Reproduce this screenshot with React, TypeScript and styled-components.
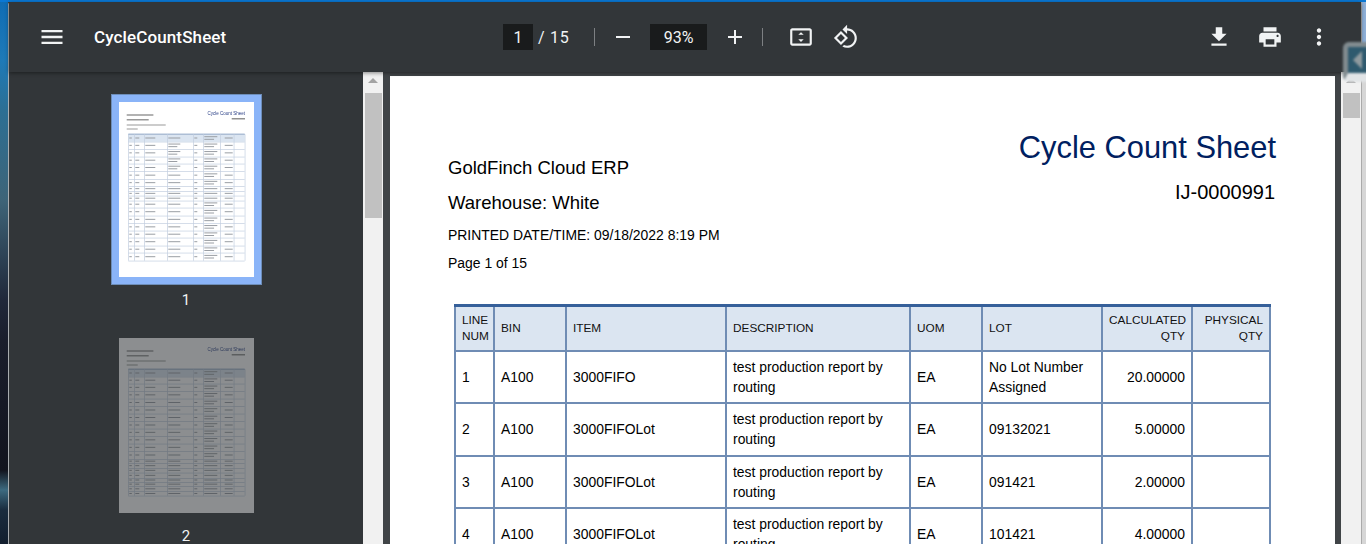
import React from "react";
import styled, { createGlobalStyle } from "styled-components";

const GlobalStyle = createGlobalStyle`
  html, body {
    margin: 0;
    padding: 0;
    height: 544px;
    overflow: hidden;
    background: #323639;
  }
`;

const Screen = styled.div`
  width: 1366px;
  height: 544px;
  display: flex;
  overflow: hidden;
  position: relative;
  font-family: Roboto, "Liberation Sans", sans-serif;
`;

const Wallpaper = styled.div`
  width: 8px;
  flex: none;
  background: linear-gradient(
    180deg,
    #0f6cb4 0,
    #1e7ab8 60px,
    #2c6f94 110px,
    #3e6478 200px,
    #20283a 300px,
    #1a1e2c 340px,
    #12141e 470px,
    #3d6a80 490px,
    #1a2c3e 510px,
    #121e2e 544px
  );
`;

const TopLine = styled.div`
  position: absolute;
  top: 0;
  left: 0;
  right: 0;
  height: 2px;
  background: #0a78d4;
`;

const Window = styled.div`
  width: 1353px;
  flex: none;
  display: flex;
  flex-direction: column;
  margin-top: 2px;
  border-left: 1px solid #a9adb0;
  border-top-left-radius: 3px;
  box-sizing: border-box;
`;

const RightEdge = styled.div`
  flex: 1;
  border-left: 1px solid #aaa;
  background: linear-gradient(180deg, #8fb0d8 0, #8fb0d8 70px, #d6d6d6 71px);
`;

const Toolbar = styled.header`
  height: 70px;
  flex: none;
  display: flex;
  align-items: center;
  background: #323639;
  color: #f1f3f4;
  box-shadow: 0 1px 4px rgba(0, 0, 0, 0.45);
  position: relative;
  z-index: 2;
`;

const TitleGroup = styled.div`
  width: 494px;
  flex: none;
  display: flex;
  align-items: center;
  gap: 28px;
  padding-left: 29px;
  box-sizing: border-box;
`;

const Title = styled.span`
  font-size: 17px;
  font-weight: 500;
  color: #fff;
  letter-spacing: 0.12px;
`;

const CenterGroup = styled.div`
  display: flex;
  align-items: center;
  font-size: 16px;
`;

const NumberBox = styled.span<{ $w: number }>`
  width: ${(p) => p.$w}px;
  height: 26px;
  display: flex;
  align-items: center;
  justify-content: center;
  background: #191b1c;
  color: #f1f3f4;
`;

const PageTotal = styled.span`
  margin-left: 5px;
  width: 56px;
  letter-spacing: 0.7px;
`;

const Divider = styled.span`
  width: 1px;
  height: 18px;
  background: #7d8083;
`;

const IconSlot = styled.span<{ $w: number; $ml?: number }>`
  width: ${(p) => p.$w}px;
  margin-left: ${(p) => p.$ml ?? 0}px;
  flex: none;
  display: flex;
  align-items: center;
  justify-content: center;
`;

const ActionGroup = styled.div`
  margin-left: auto;
  display: flex;
  align-items: center;
  padding-right: 18px;
`;

const Icon = styled.svg`
  display: block;
  flex: none;
  fill: #f1f3f4;
`;

const Body = styled.div`
  flex: 1;
  min-height: 0;
  display: flex;
`;

const Sidebar = styled.aside`
  width: 354px;
  flex: none;
  display: flex;
  flex-direction: column;
  align-items: center;
  padding: 22px 0 0 0;
  box-sizing: border-box;
  background: #323639;
  overflow: hidden;
`;

const ThumbEntry = styled.div<{ $gap: number }>`
  display: flex;
  flex-direction: column;
  align-items: center;
  flex: none;
  margin-bottom: ${(p) => p.$gap}px;
`;

const ThumbFrame = styled.div<{ $active?: boolean }>`
  padding: 8px;
  background: ${(p) => (p.$active ? "#8ab4f8" : "transparent")};
  outline: ${(p) => (p.$active ? "1px solid #6d8db8" : "none")};
  outline-offset: -1px;
`;

const ThumbPage = styled.svg<{ $dim?: boolean }>`
  display: block;
  background: #fff;
  opacity: ${(p) => (p.$dim ? 0.44 : 1)};
`;

const ThumbInk = styled.g`
  filter: blur(0.45px);
`;

const ThumbNumber = styled.span`
  margin-top: 6px;
  font-size: 15px;
  line-height: 18px;
  color: #f1f3f4;
`;

const Scrollbar = styled.div`
  width: 20px;
  flex: none;
  display: flex;
  flex-direction: column;
  align-items: center;
  background: #f1f1f1;
  padding-top: 6px;
  box-sizing: border-box;
`;

const ScrollArrow = styled.span`
  width: 0;
  height: 0;
  border-left: 5px solid transparent;
  border-right: 5px solid transparent;
  border-bottom: 5px solid #a3a3a3;
`;

const ScrollThumb = styled.span<{ $h: number }>`
  width: 17px;
  height: ${(p) => p.$h}px;
  margin-top: 10px;
  background: #c1c1c1;
`;

const Viewer = styled.main`
  flex: 1;
  min-width: 0;
  display: flex;
  background: #404447;
  padding: 4px 6px 0 7px;
  overflow: hidden;
`;

const DocPage = styled.section`
  flex: 1;
  background: #fff;
  color: #000;
  font-family: "Liberation Sans", Arial, sans-serif;
  padding: 55px 59px 0 58px;
  box-sizing: border-box;
  overflow: hidden;
`;

const DocHead = styled.div`
  display: flex;
  justify-content: space-between;
  height: 173px;
`;

const DocFacts = styled.div`
  padding-top: 26px;
`;

const CompanyLine = styled.div`
  font-size: 18.5px;
  line-height: 21px;
  margin-bottom: 14px;
`;

const SmallLine = styled.div<{ $gap: number }>`
  font-size: 13.95px;
  line-height: 16px;
  margin-bottom: ${(p) => p.$gap}px;
`;

const DocTitleBlock = styled.div`
  text-align: right;
`;

const DocTitle = styled.div`
  font-size: 30.85px;
  line-height: 34px;
  color: #002060;
`;

const DocNumber = styled.div`
  font-size: 20px;
  line-height: 23px;
  margin-top: 16px;
  margin-right: 1px;
`;

const Sheet = styled.table`
  border-collapse: collapse;
  table-layout: fixed;
  width: 815px;
  margin-left: 6px;
  border-top: 3px solid #36609a;
`;

const HeadCell = styled.th<{ $right?: boolean }>`
  height: 45px;
  padding: 0 6px 0 6px;
  box-sizing: border-box;
  background: #dbe5f1;
  border: 2px solid #6f8cb4;
  border-top: 0;
  font-size: 11.8px;
  line-height: 16px;
  font-weight: 400;
  color: #111;
  text-align: ${(p) => (p.$right ? "right" : "left")};
`;

const Cell = styled.td<{ $right?: boolean }>`
  height: 52.5px;
  padding: 0 6px;
  box-sizing: border-box;
  border: 2px solid #6f8cb4;
  font-size: 13.9px;
  line-height: 20px;
  text-align: ${(p) => (p.$right ? "right" : "left")};
`;

const TabOverlay = styled.div`
  position: absolute;
  top: 42px;
  left: 1343px;
  width: 30px;
  height: 40px;
  box-sizing: border-box;
  border: 5px solid rgba(140, 145, 148, 0.9);
  border-bottom: 9px solid rgba(235, 236, 236, 0.95);
  border-radius: 6px;
  background: #2f5a6e;
  filter: blur(0.8px);
  z-index: 3;
  display: flex;
  align-items: center;
`;

const TabArrow = styled.span`
  width: 0;
  height: 0;
  border-top: 9px solid transparent;
  border-bottom: 9px solid transparent;
  border-right: 9px solid #8f9a9e;
  margin-left: 5px;
`;

const rowsOne = [32.3, 39.7, 47, 54.7, 61.7, 69.3, 77, 84.3, 89, 93.7, 98.7, 105.7, 113.7, 121, 128.7, 135.7, 143.7, 150.7, 158.7];
const rowsTwo = [31.3, 38.7, 45.7, 53, 60.7, 68.3, 75.7, 83.3, 90.7, 98, 105.7, 113, 121, 125.3, 130, 134.7, 140, 144, 148.3, 153.3, 157.7];
const thumbCols = [9.3, 15.3, 25.3, 48.3, 74.3, 84.3, 101.3, 114.7, 125.7];
const barWidths = [2.5, 4, 10, 12, 3, 13, 8];

function Thumbnail({ rows, dim, longDesc }: { rows: number[]; dim?: boolean; longDesc: number }) {
  const left = thumbCols[0];
  const right = thumbCols[thumbCols.length - 1];
  return (
    <ThumbPage $dim={dim} width={135} height={175} viewBox="0 0 135 175">
      <ThumbInk>
        <text x={126} y={12.5} fontSize={4.5} textAnchor="end" fill="#2a3f86" fontFamily="Liberation Sans">
          Cycle Count Sheet
        </text>
        <rect x={112.7} y={16.2} width={13.3} height={1.2} fill="#777" />
        <rect x={7.7} y={12.4} width={26.7} height={1.2} fill="#808080" />
        <rect x={7.7} y={17.2} width={22} height={1.2} fill="#808080" />
        <rect x={7.7} y={22.5} width={39} height={1} fill="#999" />
        <rect x={7.7} y={26.5} width={11} height={1} fill="#999" />
        <rect x={left} y={rows[0]} width={right - left} height={rows[1] - rows[0]} fill="#dbe5f1" />
        <rect x={left} y={rows[0] - 0.5} width={right - left} height={0.8} fill="#36609a" />
        {rows.map((y) => (
          <rect key={y} x={left} y={y} width={right - left} height={0.7} fill="#c3cfe0" />
        ))}
        {thumbCols.map((x) => (
          <rect key={x} x={x} y={rows[0]} width={0.7} height={rows[rows.length - 1] - rows[0]} fill="#c3cfe0" />
        ))}
        {rows.slice(0, -1).map((y, r) => {
          const h = rows[r + 1] - y;
          return barWidths.map((w, c) => {
            const two = h > 6 && (c === 5 || (c === 3 && r > 0 && r <= longDesc));
            const mid = y + h / 2;
            const x = c === 6 ? thumbCols[7] - w - 1 : thumbCols[c] + 1;
            return (
              <g key={c}>
                <rect x={x} y={two ? mid - 1.8 : mid - 0.5} width={w} height={1} fill="#9a9ea4" />
                {two && <rect x={x} y={mid + 0.8} width={w * 0.75} height={1} fill="#9a9ea4" />}
              </g>
            );
          });
        })}
      </ThumbInk>
    </ThumbPage>
  );
}

const sheetRows = [
  ["1", "A100", "3000FIFO", ["test production report by", "routing"], "EA", ["No Lot Number", "Assigned"], "20.00000"],
  ["2", "A100", "3000FIFOLot", ["test production report by", "routing"], "EA", ["09132021"], "5.00000"],
  ["3", "A100", "3000FIFOLot", ["test production report by", "routing"], "EA", ["091421"], "2.00000"],
  ["4", "A100", "3000FIFOLot", ["test production report by", "routing"], "EA", ["101421"], "4.00000"],
] as const;

const colWidths = [39, 72, 160, 184, 72, 120, 90, 78];

export default function App() {
  return (
    <Screen>
      <GlobalStyle />
      <TopLine />
      <Wallpaper />
      <Window>
        <Toolbar>
          <TitleGroup>
            <Icon width={28} height={28} viewBox="0 0 24 24">
              <path d="M3 18h18v-2H3v2zm0-5h18v-2H3v2zm0-7v2h18V6H3z" />
            </Icon>
            <Title>CycleCountSheet</Title>
          </TitleGroup>
          <CenterGroup>
            <NumberBox $w={30}>1</NumberBox>
            <PageTotal>/ 15</PageTotal>
            <Divider />
            <IconSlot $w={55}>
              <Icon width={24} height={24} viewBox="0 0 24 24">
                <path d="M5 11h14v2H5z" />
              </Icon>
            </IconSlot>
            <NumberBox $w={57}>93%</NumberBox>
            <IconSlot $w={55}>
              <Icon width={24} height={24} viewBox="0 0 24 24">
                <path d="M19 13h-6v6h-2v-6H5v-2h6V5h2v6h6v2z" />
              </Icon>
            </IconSlot>
            <Divider />
            <IconSlot $w={46} $ml={15}>
              <Icon width={26} height={26} viewBox="0 0 24 24">
                <path d="M20 4H4c-1.1 0-2 .9-2 2v12c0 1.1.9 2 2 2h16c1.1 0 2-.9 2-2V6c0-1.1-.9-2-2-2zm0 14H4V6h16v12zM12 7.5 9.5 10h5L12 7.5zm0 9 2.5-2.5h-5l2.5 2.5z" />
              </Icon>
            </IconSlot>
            <IconSlot $w={44}>
              <Icon width={26} height={26} viewBox="0 0 24 24">
                <path d="M7.34 6.41.86 12.9l6.49 6.48 6.49-6.48-6.5-6.49zM3.69 12.9l3.66-3.66L11 12.9l-3.66 3.66-3.65-3.66zm15.67-6.26C17.61 4.88 15.3 4 13 4V.76L8.76 5 13 9.24V6c1.79 0 3.58.68 4.95 2.05 2.73 2.73 2.73 7.17 0 9.9C16.58 19.32 14.79 20 13 20c-.97 0-1.94-.21-2.84-.61l-1.49 1.49C10.02 21.62 11.51 22 13 22c2.3 0 4.61-.88 6.36-2.64 3.52-3.51 3.52-9.21 0-12.72z" />
              </Icon>
            </IconSlot>
          </CenterGroup>
          <ActionGroup>
            <IconSlot $w={51}>
              <Icon width={26} height={26} viewBox="0 0 24 24">
                <path d="M19 9h-4V3H9v6H5l7 7 7-7zM5 18v2h14v-2H5z" />
              </Icon>
            </IconSlot>
            <IconSlot $w={51}>
              <Icon width={26} height={26} viewBox="0 0 24 24">
                <path d="M19 8H5c-1.66 0-3 1.34-3 3v6h4v4h12v-4h4v-6c0-1.66-1.34-3-3-3zm-3 11H8v-5h8v5zm3-7c-.55 0-1-.45-1-1s.45-1 1-1 1 .45 1 1-.45 1-1 1zm-1-9H6v4h12V3z" />
              </Icon>
            </IconSlot>
            <IconSlot $w={48}>
              <Icon width={26} height={26} viewBox="0 0 24 24">
                <path d="M12 8c1.1 0 2-.9 2-2s-.9-2-2-2-2 .9-2 2 .9 2 2 2zm0 2c-1.1 0-2 .9-2 2s.9 2 2 2 2-.9 2-2-.9-2-2-2zm0 6c-1.1 0-2 .9-2 2s.9 2 2 2 2-.9 2-2-.9-2-2-2z" />
              </Icon>
            </IconSlot>
          </ActionGroup>
        </Toolbar>
        <Body>
          <Sidebar>
            <ThumbEntry $gap={21}>
              <ThumbFrame $active>
                <Thumbnail rows={rowsOne} longDesc={4} />
              </ThumbFrame>
              <ThumbNumber>1</ThumbNumber>
            </ThumbEntry>
            <ThumbEntry $gap={0}>
              <ThumbFrame>
                <Thumbnail rows={rowsTwo} longDesc={0} dim />
              </ThumbFrame>
              <ThumbNumber>2</ThumbNumber>
            </ThumbEntry>
          </Sidebar>
          <Scrollbar>
            <ScrollArrow />
            <ScrollThumb $h={125} />
          </Scrollbar>
          <Viewer>
            <DocPage>
              <DocHead>
                <DocFacts>
                  <CompanyLine>GoldFinch Cloud ERP</CompanyLine>
                  <CompanyLine>Warehouse: White</CompanyLine>
                  <SmallLine $gap={12}>PRINTED DATE/TIME: 09/18/2022 8:19 PM</SmallLine>
                  <SmallLine $gap={0}>Page 1 of 15</SmallLine>
                </DocFacts>
                <DocTitleBlock>
                  <DocTitle>Cycle Count Sheet</DocTitle>
                  <DocNumber>IJ-0000991</DocNumber>
                </DocTitleBlock>
              </DocHead>
              <Sheet>
                <colgroup>
                  {colWidths.map((w, i) => (
                    <col key={i} width={w} />
                  ))}
                </colgroup>
                <thead>
                  <tr>
                    <HeadCell>
                      LINE
                      <br />
                      NUM
                    </HeadCell>
                    <HeadCell>BIN</HeadCell>
                    <HeadCell>ITEM</HeadCell>
                    <HeadCell>DESCRIPTION</HeadCell>
                    <HeadCell>UOM</HeadCell>
                    <HeadCell>LOT</HeadCell>
                    <HeadCell $right>
                      CALCULATED
                      <br />
                      QTY
                    </HeadCell>
                    <HeadCell $right>
                      PHYSICAL
                      <br />
                      QTY
                    </HeadCell>
                  </tr>
                </thead>
                <tbody>
                  {sheetRows.map((row) => (
                    <tr key={row[0]}>
                      <Cell>{row[0]}</Cell>
                      <Cell>{row[1]}</Cell>
                      <Cell>{row[2]}</Cell>
                      <Cell>
                        {row[3][0]}
                        <br />
                        {row[3][1]}
                      </Cell>
                      <Cell>{row[4]}</Cell>
                      <Cell>
                        {row[5][0]}
                        {row[5][1] && <br />}
                        {row[5][1]}
                      </Cell>
                      <Cell $right>{row[6]}</Cell>
                      <Cell />
                    </tr>
                  ))}
                </tbody>
              </Sheet>
            </DocPage>
          </Viewer>
          <Scrollbar>
            <ScrollArrow />
            <ScrollThumb $h={25} />
          </Scrollbar>
        </Body>
      </Window>
      <RightEdge />
      <TabOverlay>
        <TabArrow />
      </TabOverlay>
    </Screen>
  );
}
